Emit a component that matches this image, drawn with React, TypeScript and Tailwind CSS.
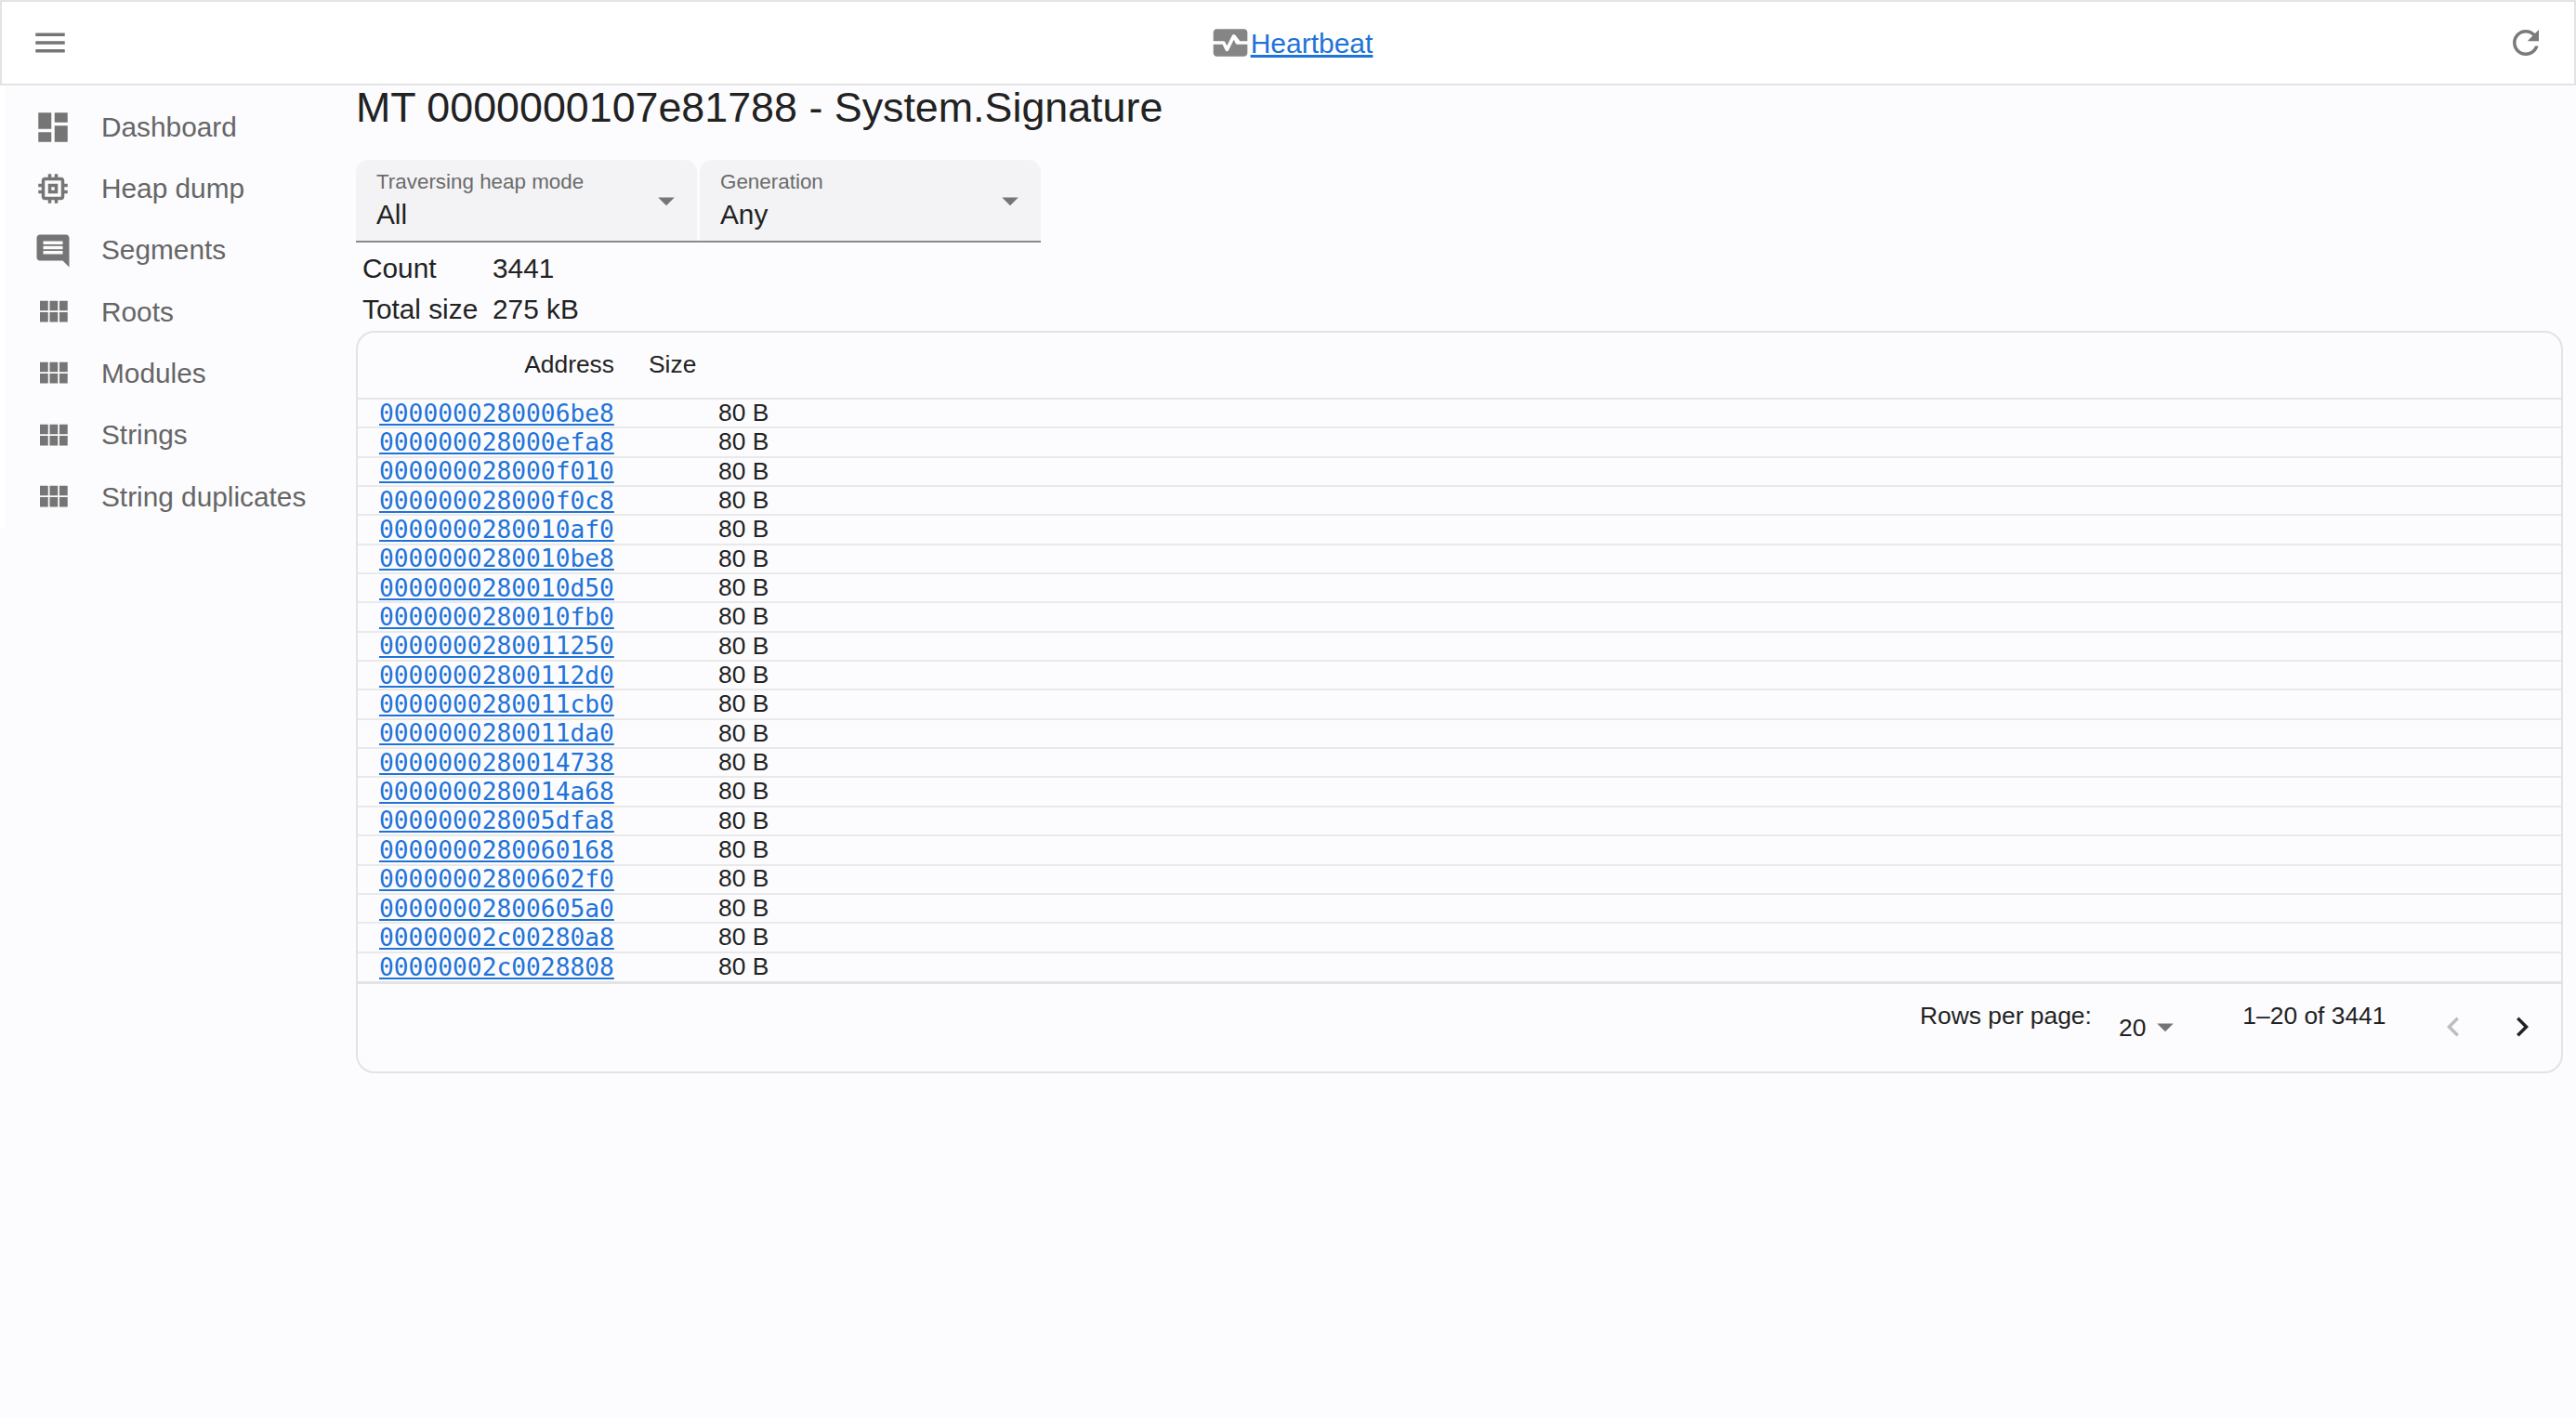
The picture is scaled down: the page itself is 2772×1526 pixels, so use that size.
import type { ReactNode } from "react";

const DASHBOARD = "M3 13h8V3H3v10zm0 8h8v-6H3v6zm10 0h8V11h-8v10zm0-18v6h8V3h-8z";
const MEMORY =
  "M15 9H9v6h6V9zm-2 4h-2v-2h2v2zm8-2V9h-2V7c0-1.1-.9-2-2-2h-2V3h-2v2h-2V3H9v2H7c-1.1 0-2 .9-2 2v2H3v2h2v2H3v2h2v2c0 1.1.9 2 2 2h2v2h2v-2h2v2h2v-2h2c1.1 0 2-.9 2-2v-2h2v-2h-2v-2h2zm-4 6H7V7h10v10z";
const COMMENT =
  "M21.99 4c0-1.1-.89-2-1.99-2H4c-1.1 0-2 .9-2 2v12c0 1.1.9 2 2 2h14l4 4-.01-18zM18 14H6v-2h12v2zm0-3H6V9h12v2zm0-3H6V6h12v2z";
const MODULE = "M4 11h5V5H4v6zm0 7h5v-6H4v6zm6 0h5v-6h-5v6zm6 0h5v-6h-5v6zm-6-7h5V5h-5v6zm6-6v6h5V5h-5z";
const MENU = "M3 18h18v-2H3v2zm0-5h18v-2H3v2zm0-7v2h18V6H3z";
const REFRESH =
  "M17.65 6.35C16.2 4.9 14.21 4 12 4c-4.42 0-7.99 3.58-7.99 8s3.57 8 7.99 8c3.73 0 6.84-2.55 7.73-6h-2.08c-.82 2.33-3.04 4-5.65 4-3.31 0-6-2.69-6-6s2.69-6 6-6c1.66 0 3.14.69 4.22 1.78L13 11h7V4l-2.35 2.35z";
const HEART =
  "M15.11 12.45 14 10.24l-3.11 6.21c-.16.34-.51.55-.89.55s-.73-.21-.89-.55L7.38 13H2v5c0 1.1.9 2 2 2h16c1.1 0 2-.9 2-2v-5h-6c-.38 0-.73-.21-.89-.55zM20 4H4c-1.1 0-2 .9-2 2v5h6c.38 0 .73.21.89.55L10 13.76l3.11-6.21c.34-.68 1.45-.68 1.79 0L17.62 11H22V6c0-1.1-.9-2-2-2z";
const DROP = "M7 10l5 5 5-5z";
const LEFT = "M15.41 7.41 14 6l-6 6 6 6 1.41-1.41L10.83 12z";
const RIGHT = "M10 6 8.59 7.41 13.17 12l-4.58 4.59L10 18l6-6z";

const NAV = [
  { label: "Dashboard", icon: DASHBOARD },
  { label: "Heap dump", icon: MEMORY },
  { label: "Segments", icon: COMMENT },
  { label: "Roots", icon: MODULE },
  { label: "Modules", icon: MODULE },
  { label: "Strings", icon: MODULE },
  { label: "String duplicates", icon: MODULE },
];

const ADDRESSES = [
  "0000000280006be8",
  "000000028000efa8",
  "000000028000f010",
  "000000028000f0c8",
  "0000000280010af0",
  "0000000280010be8",
  "0000000280010d50",
  "0000000280010fb0",
  "0000000280011250",
  "00000002800112d0",
  "0000000280011cb0",
  "0000000280011da0",
  "0000000280014738",
  "0000000280014a68",
  "000000028005dfa8",
  "0000000280060168",
  "00000002800602f0",
  "00000002800605a0",
  "00000002c00280a8",
  "00000002c0028808",
];

function Icon({ d, className }: { d: string; className: string }) {
  return (
    <svg viewBox="0 0 24 24" fill="currentColor" className={className}>
      <path d={d} />
    </svg>
  );
}

function Filter({ label, value, children }: { label: string; value: string; children?: ReactNode }) {
  return (
    <div className="flex h-[87px] w-[367px] items-start justify-between rounded-t-[14px] bg-[#f3f3f5] pl-[22px] pr-[12px]">
      <div className="flex flex-col">
        <span className="mt-[11px] text-[22.4px] leading-[26px] text-[#6b6b6b]">{label}</span>
        <span className="mt-[4px] text-[29.8px] leading-[36px] text-[#222]">{value}</span>
      </div>
      {children}
    </div>
  );
}

export default function App() {
  return (
    <div className="min-h-[1526px] bg-[#fcfcfe] font-['Liberation_Sans',sans-serif]">
      <header className="flex h-[92px] items-center justify-between border-2 border-[#e3e3e3] bg-white pl-[31px] pr-[31px]">
        <Icon d={MENU} className="h-[42px] w-[42px] text-[#757575]" />
        <div className="ml-[7px] flex items-center">
          <Icon d={HEART} className="h-[44px] w-[44px] text-[#858585]" />
          <a href="#" className="text-[30px] text-[#1f73d8] underline">
            Heartbeat
          </a>
        </div>
        <Icon d={REFRESH} className="h-[42px] w-[42px] text-[#7a7a7a]" />
      </header>

      <div className="flex">
        {/* the drawer leaves a thin white strip on its left, only as tall as its items */}
        <aside className="w-[383px] shrink-0 self-start border-l-[6px] border-white pl-[30px] pt-[12px]">
          {NAV.map((item) => (
            <div key={item.label} className="flex h-[66.3px] items-center text-[29.8px] text-[#666]">
              <Icon d={item.icon} className="h-[42px] w-[42px] shrink-0 text-[#757575]" />
              <span className="ml-[31px]">{item.label}</span>
            </div>
          ))}
        </aside>

        <main className="mr-[14px] flex-1">
          <h1 className="mt-[2px] h-[42px] text-[44.8px] leading-[42px] text-[#222]">
            MT 0000000107e81788 - System.Signature
          </h1>

          <div className="mt-[36px] flex w-[737px] justify-between border-b-2 border-[#8a8a8a]">
            <Filter label="Traversing heap mode" value="All">
              <Icon d={DROP} className="mt-[23px] h-[42px] w-[42px] text-[#757575]" />
            </Filter>
            <Filter label="Generation" value="Any">
              <Icon d={DROP} className="mt-[23px] h-[42px] w-[42px] text-[#757575]" />
            </Filter>
          </div>

          <div className="ml-[7px] mt-[6px] text-[29.8px] leading-[44px] text-[#222]">
            <div className="flex">
              <span className="w-[140px]">Count</span>
              <span>3441</span>
            </div>
            <div className="flex">
              <span className="w-[140px]">Total size</span>
              <span>275 kB</span>
            </div>
          </div>

          <div className="mt-[1px] h-[799px] rounded-[20px] border-2 border-[#e3e3e3]">
            <div className="flex h-[72px] items-center border-b-2 border-[#e6e6e6] text-[26.4px] text-[#222]">
              <span className="w-[276px] text-right">Address</span>
              <span className="ml-[37px]">Size</span>
            </div>
            {ADDRESSES.map((address, i) => (
              <div
                key={address}
                className={
                  i === ADDRESSES.length - 1
                    ? "flex h-[33px] items-center border-b-[3px] border-[#e3e3e3] text-[26.4px] text-[#222]"
                    : "flex h-[31.35px] items-center border-b-2 border-[#e9e9e9] text-[26.4px] text-[#222]"
                }
              >
                <a
                  href="#"
                  className="ml-[23px] w-[365px] font-['DejaVu_Sans_Mono',monospace] text-[26.25px] leading-[30px] text-[#1f73d8] underline"
                >
                  {address}
                </a>
                <span>80 B</span>
              </div>
            ))}
            <div className="flex items-start pl-[1681px] text-[26.4px] text-[#222]">
              <span className="mt-[15px] w-[214px]">Rows per page:</span>
              <span className="mt-[28px]">20</span>
              <Icon d={DROP} className="mt-[25px] h-[42px] w-[42px] shrink-0 text-[#757575]" />
              <span className="ml-[62px] mt-[15px] w-[206px]">1–20 of 3441</span>
              <Icon d={LEFT} className="mt-[25px] h-[42px] w-[42px] shrink-0 text-[#bdbdbd]" />
              <Icon d={RIGHT} className="ml-[32px] mt-[25px] h-[42px] w-[42px] shrink-0 text-[#222]" />
            </div>
          </div>
        </main>
      </div>
    </div>
  );
}
